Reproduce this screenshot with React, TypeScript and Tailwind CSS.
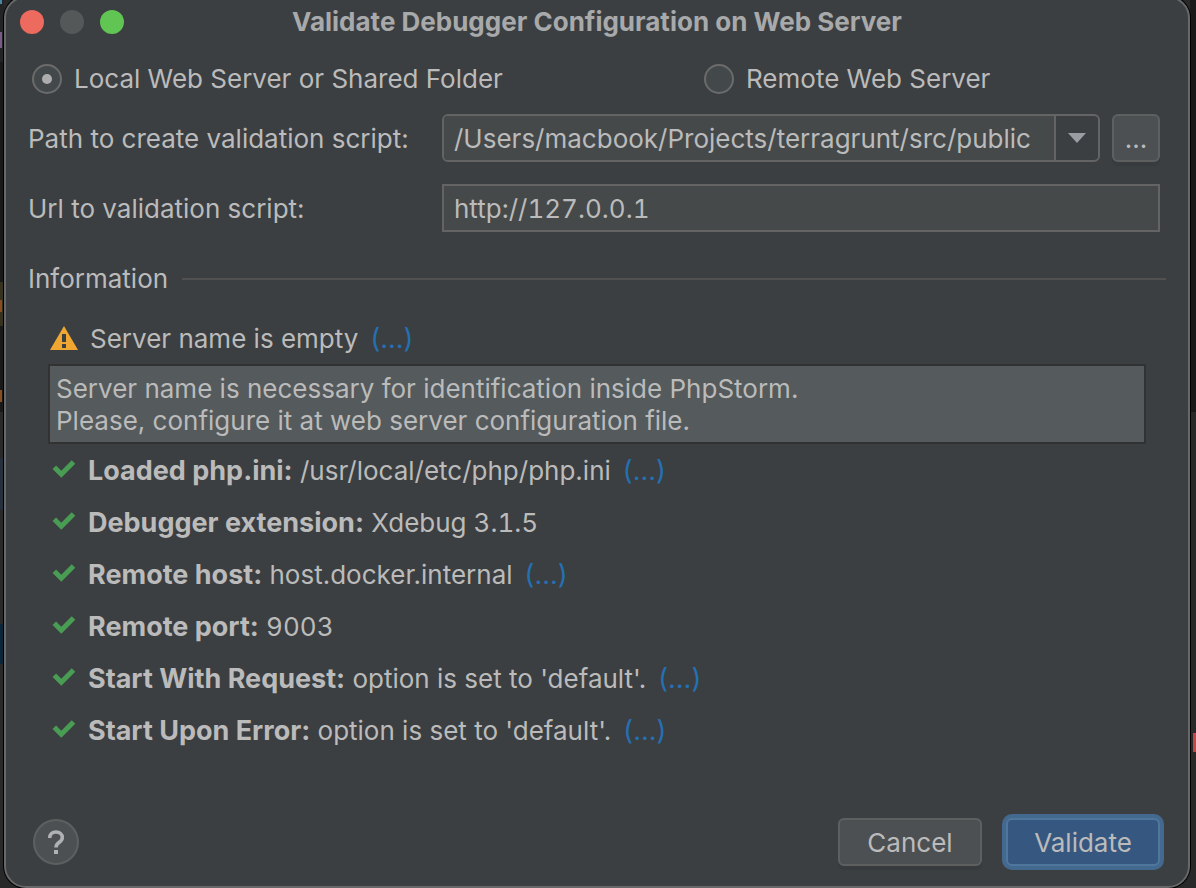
import { ReactNode, useState } from "react";

type Check = { label: string; value: string; link: boolean; numeric?: boolean };

const checks: Check[] = [
  { label: "Loaded php.ini:", value: "/usr/local/etc/php/php.ini", link: true },
  { label: "Debugger extension:", value: "Xdebug 3.1.5", link: false, numeric: true },
  { label: "Remote host:", value: "host.docker.internal", link: true },
  { label: "Remote port:", value: "9003", link: false, numeric: true },
  { label: "Start With Request:", value: "option is set to 'default'.", link: true },
  { label: "Start Upon Error:", value: "option is set to 'default'.", link: true },
];

function CheckIcon() {
  return (
    <svg viewBox="0 0 28 28" className="size-7 shrink-0" aria-hidden="true">
      <path d="M4.3 10.300 11.300 17.300 23.500 5" fill="none" stroke="#499c54" strokeWidth="5" />
    </svg>
  );
}

function WarningIcon() {
  return (
    <svg viewBox="0 0 28 28" className="size-7 shrink-0" aria-hidden="true">
      <path d="M14 1 28 25H0Z" fill="#f0a732" />
      <path d="M12 9h4v8h-4zM12 19h4v4h-4z" fill="#3c3f41" />
    </svg>
  );
}

function DetailsLink() {
  return (
    <a href="#details" className="ml-3 text-[27px] leading-8 text-[#2470b3]">
      (...)
    </a>
  );
}

function ModeRadio({ checked, onSelect, children }: { checked: boolean; onSelect: () => void; children: ReactNode }) {
  return (
    <label className="flex items-center gap-3">
      <input
        type="radio"
        name="mode"
        checked={checked}
        onChange={onSelect}
        className="grid size-[30px] shrink-0 appearance-none place-content-center rounded-full border-2 border-[#6b6b6b] bg-[#43494a] before:size-[10px] before:rounded-full checked:before:bg-[#adadad]"
      />
      <span>{children}</span>
    </label>
  );
}

function Backdrop() {
  return (
    <div className="pointer-events-none absolute inset-0 -z-10 bg-[#292929]" aria-hidden="true">
      <div className="absolute left-0 top-0 h-[62px] w-1 bg-[#222425]" />
      <div className="absolute left-0 top-0 h-1 w-[2px] bg-[#4a86a8]" />
      <div className="absolute left-0 top-8 h-4 w-[2px] bg-[#7b5a86]" />
      <div className="absolute left-0 top-[62px] h-[350px] w-1 bg-[#191919]" />
      <div className="absolute left-0 top-[282px] h-[44px] w-1 bg-[#37321f]" />
      <div className="absolute left-0 top-[300px] h-3 w-[2px] bg-[#8a4d1c]" />
      <div className="absolute left-0 top-[390px] h-3 w-[2px] bg-[#8a4d1c]" />
      <div className="absolute left-0 top-[458px] h-[52px] w-1 bg-[#26303c]" />
      <div className="absolute left-0 top-[624px] h-10 w-1 bg-[#0b2539]" />
      <div className="absolute right-0 top-0 h-[412px] w-[6px] bg-[#191919]" />
      <div className="absolute right-0 top-[733px] h-[19px] w-[3px] bg-[#c04848]" />
    </div>
  );
}

export default function App() {
  const [local, setLocal] = useState(true);
  const [path, setPath] = useState("/Users/macbook/Projects/terragrunt/src/public");
  const [url, setUrl] = useState("http://127.0.0.1");

  return (
    <div className="relative isolate flex min-h-screen flex-col overflow-hidden font-['Inter',sans-serif] text-[26px] leading-8 text-[#bbbbbb]">
      <Backdrop />
      <main className="-mt-1 ml-1 mr-[6px] flex flex-1 flex-col rounded-[22px] border-2 border-[#666869] bg-[#3c3f41] shadow-[0_0_0_1px_#000000]">
        <header className="grid h-[46px] grid-cols-[1fr_auto_1fr] items-center px-[14px] pt-px">
          <div className="flex gap-4">
            <button aria-label="Close" className="size-6 rounded-full bg-[#ed6a5e]" />
            <button aria-label="Minimize" disabled className="size-6 rounded-full bg-[#555859]" />
            <button aria-label="Zoom" className="size-6 rounded-full bg-[#61c554]" />
          </div>
          <h1 className="font-bold text-[#a8a9aa]">Validate Debugger Configuration on Web Server</h1>
        </header>

        <form className="flex flex-1 flex-col pl-[22px] pr-7" onSubmit={(e) => e.preventDefault()}>
          <div className="mt-[19px] grid grid-cols-[28fr_19fr] pl-1">
            <ModeRadio checked={local} onSelect={() => setLocal(true)}>Local Web Server or Shared Folder</ModeRadio>
            <ModeRadio checked={!local} onSelect={() => setLocal(false)}>Remote Web Server</ModeRadio>
          </div>

          <div className="mt-[19px] grid grid-cols-[414px_1fr] items-center gap-y-[22px]">
            <label htmlFor="path" className="pt-[2px]">Path to create validation script:</label>
            <div className="flex gap-3">
              <div className="flex h-12 min-w-0 flex-1 overflow-hidden rounded-md border-2 border-[#646464]">
                <input
                  id="path"
                  value={path}
                  onChange={(e) => setPath(e.target.value)}
                  className="min-w-0 flex-1 bg-[#45494a] px-[10px] pt-[2px] outline-none"
                />
                <button
                  type="button"
                  aria-label="Show recent paths"
                  className="grid w-11 place-content-center border-l-2 border-[#646464]"
                >
                  <svg viewBox="0 0 18 10" className="h-[10px] w-[18px]" aria-hidden="true">
                    <path d="M0 0h18L9 10z" fill="#9a9da1" />
                  </svg>
                </button>
              </div>
              <button
                type="button"
                aria-label="Browse"
                className="size-12 rounded-md border-2 border-[#5e6060] bg-[#4c5052] pt-[2px] shadow-[0_4px_0_#383b3d]"
              >
                ...
              </button>
            </div>

            <label htmlFor="url" className="pt-[2px]">Url to validation script:</label>
            <input
              id="url"
              value={url}
              onChange={(e) => setUrl(e.target.value)}
              className="h-12 min-w-0 border-2 border-[#646464] bg-[#45494a] px-[10px] tabular-nums outline-none"
            />
          </div>

          <section className="mt-[31px]">
            <div className="-mr-[6px] flex items-center gap-[14px]">
              <h2>Information</h2>
              <div className="h-[2px] flex-1 bg-[#515151]" />
            </div>
            <div className="ml-5 mr-[14px] mt-7">
              <div className="flex items-center pl-[2px]">
                <WarningIcon />
                <span className="ml-3">Server name is empty</span>
                <DetailsLink />
              </div>
              <p className="mt-[9px] border-2 border-[#323232] bg-[#555a5c] px-[6px] pb-[5px] pt-[7px]">
                Server name is necessary for identification inside PhpStorm.
                <br />
                Please, configure it at web server configuration file.
              </p>
              <ul className="mt-[11px] flex flex-col gap-5">
                {checks.map((check) => (
                  <li key={check.label} className="flex items-center pl-[2px]">
                    <CheckIcon />
                    <span className="ml-[10px]">
                      <b className="text-[27px] font-bold leading-8">{check.label}</b>{" "}
                      <span className={check.numeric ? "tabular-nums" : ""}>{check.value}</span>
                    </span>
                    {check.link && <DetailsLink />}
                  </li>
                ))}
              </ul>
            </div>
          </section>

          <footer className="mb-5 mt-auto flex items-center gap-6 pl-[5px]">
            <button
              type="button"
              aria-label="Help"
              className="grid size-[46px] place-content-center rounded-full border-2 border-[#5e6060] bg-[#4c5052]"
            >
              <svg viewBox="0 0 18 26" className="h-[26px] w-[18px]" fill="none" aria-hidden="true">
                <path d="M2.700 9C2.700 5 5.300 3 9 3s6.300 2.200 6.300 5.400c0 2.500-1.300 3.500-3 4.800C10 14.800 9 15.700 9 18.500" stroke="#afb1b3" strokeWidth="3.600" />
                <path d="M7 21h4v4H7z" fill="#afb1b3" />
              </svg>
            </button>
            <button
              type="button"
              className="ml-auto h-12 w-36 rounded-md border-2 border-[#5e6060] bg-[#4c5052] pt-[2px] shadow-[0_4px_0_#383b3d]"
            >
              Cancel
            </button>
            <button
              type="submit"
              className="h-12 w-[154px] rounded-md border-2 border-[#4f769c] bg-[#365880] pt-[2px] shadow-[0_0_0_4px_#43698e]"
            >
              Validate
            </button>
          </footer>
        </form>
      </main>
    </div>
  );
}
